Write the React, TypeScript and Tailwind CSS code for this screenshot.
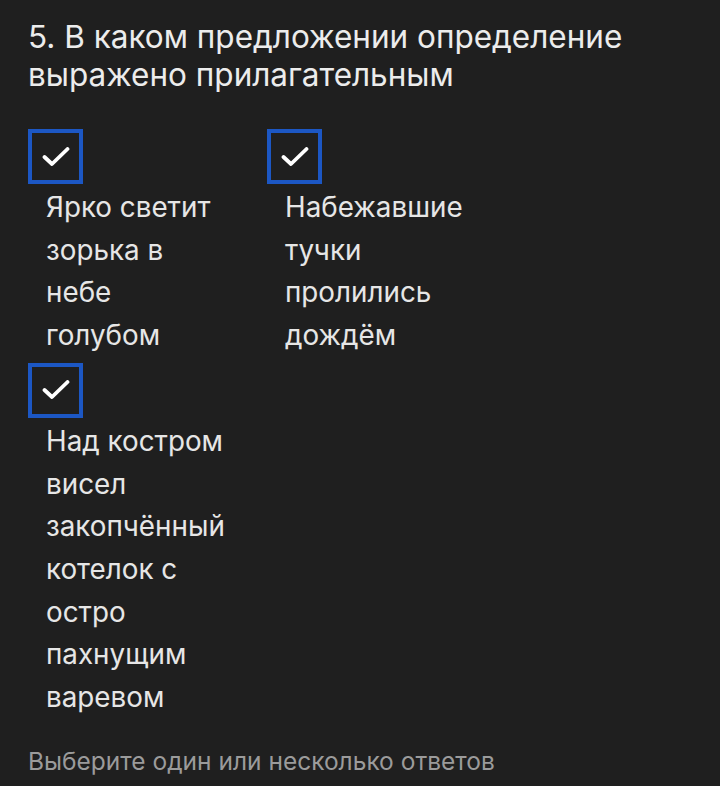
import { useState } from "react";

type Option = {
  id: number;
  text: string;
};

const options: Option[] = [
  { id: 1, text: "Ярко светит зорька в небе голубом" },
  { id: 2, text: "Набежавшие тучки пролились дождём" },
  { id: 3, text: "Над костром висел закопчённый котелок с остро пахнущим варевом" },
];

function CheckMark() {
  return (
    <svg width="28" height="20" viewBox="0 0 28 20" fill="none" aria-hidden>
      <path d="M2.5 10 L10 17 L25.5 2" stroke="#ffffff" strokeWidth="3.8" strokeLinecap="round" strokeLinejoin="round" />
    </svg>
  );
}

function OptionItem({ option, checked, onToggle }: { option: Option; checked: boolean; onToggle: () => void }) {
  return (
    <div className="flex w-[239px] flex-col">
      <button
        type="button"
        onClick={onToggle}
        className="flex h-[55px] w-[55px] items-center justify-center border-[4px] border-[#1c57c4] bg-transparent"
        aria-pressed={checked}
      >
        {checked ? <CheckMark /> : null}
      </button>
      <p className="ml-[18px] mt-[2px] w-[186px] text-[27.8px] leading-[42.7px] text-[#e6e6e6]">{option.text}</p>
    </div>
  );
}

export default function App() {
  const [selected, setSelected] = useState<number[]>([1, 2, 3]);

  const toggle = (id: number) =>
    setSelected((prev) => (prev.includes(id) ? prev.filter((x) => x !== id) : [...prev, id]));

  return (
    <div className="min-h-[786px] w-full bg-[#1f1f1f] px-[28px] pt-[18px] font-['Inter','Noto_Sans',sans-serif]">
      <h1 className="text-[31.5px] font-normal leading-[38px] text-[#ececec]">
        5. В каком предложении определение выражено прилагательным
      </h1>
      <div className="mt-[35px] flex flex-wrap gap-y-[6px]">
        {options.map((option) => (
          <OptionItem key={option.id} option={option} checked={selected.includes(option.id)} onToggle={() => toggle(option.id)} />
        ))}
      </div>
      <p className="mt-[26px] text-[24.5px] leading-[32px] text-[#9b9b9b]">Выберите один или несколько ответов</p>
    </div>
  );
}
